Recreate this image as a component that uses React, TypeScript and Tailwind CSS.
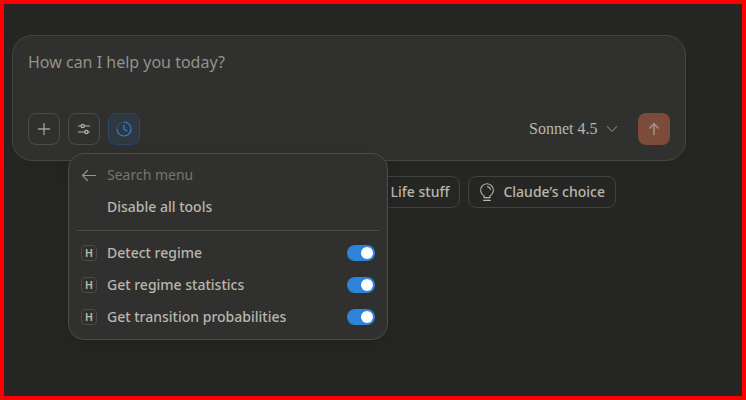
import { useState } from "react";

const tools = ["Detect regime", "Get regime statistics", "Get transition probabilities"];

function PlusIcon() {
  return (
    <svg width="16" height="16" viewBox="0 0 16 16" fill="none" stroke="currentColor" strokeWidth="1.3" strokeLinecap="round" aria-hidden="true">
      <path d="M8 2.5v11M2.5 8h11" />
    </svg>
  );
}

function SlidersIcon() {
  return (
    <svg width="16" height="16" viewBox="0 0 16 16" fill="none" stroke="currentColor" strokeWidth="1.2" strokeLinecap="round" aria-hidden="true">
      <path d="M2.5 5h2.5M8.4 5h5.1M2.5 11h6.2M12.1 11h1.4" />
      <circle cx="6.7" cy="5" r="1.6" />
      <circle cx="10.4" cy="11" r="1.6" />
    </svg>
  );
}

function ClockIcon() {
  return (
    <svg width="18" height="18" viewBox="0 0 18 18" fill="none" stroke="currentColor" strokeWidth="1.2" strokeLinecap="round" aria-hidden="true">
      <path d="M9 2a7 7 0 1 1-7 7" />
      <path d="M9 5v4.2l2.8 1.6" />
      <path d="M2.6 6.2v.01M4.1 4v.01M6.3 2.6v.01" strokeWidth="1.1" />
    </svg>
  );
}

function ArrowUpIcon() {
  return (
    <svg width="16" height="16" viewBox="0 0 16 16" fill="none" stroke="currentColor" strokeWidth="1.5" strokeLinecap="round" strokeLinejoin="round" aria-hidden="true">
      <path d="M8 13.5V2.8M3.8 7 8 2.8 12.2 7" />
    </svg>
  );
}

function ArrowLeftIcon() {
  return (
    <svg width="16" height="16" viewBox="0 0 16 16" fill="none" stroke="currentColor" strokeWidth="1.1" strokeLinecap="round" strokeLinejoin="round" aria-hidden="true">
      <path d="M14.5 8.5H1.7M6.5 3.5l-5 5 5 5" />
    </svg>
  );
}

function ChevronIcon() {
  return (
    <svg className="pointer-events-none" width="12" height="12" viewBox="0 0 12 12" fill="none" stroke="#96948b" strokeLinecap="round" strokeLinejoin="round" aria-hidden="true">
      <path d="M1.3 3.5 6 8.5l4.7-5" />
    </svg>
  );
}

function CoffeeIcon() {
  return (
    <svg width="16" height="16" viewBox="0 0 16 16" fill="none" stroke="currentColor" aria-hidden="true">
      <path d="M2 4h10v6a3 3 0 0 1-3 3H5a3 3 0 0 1-3-3zM12 5h1a2 2 0 0 1 0 5h-1" />
    </svg>
  );
}

function BulbIcon() {
  return (
    <svg width="16" height="20" viewBox="0 0 16 20" fill="none" stroke="currentColor" strokeWidth="1.1" strokeLinecap="round" strokeLinejoin="round" aria-hidden="true">
      <path d="M5 15.6v-1.8a6.4 6.4 0 1 1 6 0v1.8ZM4.6 18.4h6.8" />
      <path d="M8.6 4.6a3.4 3.4 0 0 1 2.8 2.8" />
    </svg>
  );
}

function ToolRow({ name }: { name: string }) {
  const [on, setOn] = useState(true);
  return (
    <label className="flex h-8 items-center gap-2.5 px-3 text-sm font-medium text-[#b8b6ad]">
      <span className="flex size-4 items-center justify-center rounded border border-[#4b4b48] font-['Inter',sans-serif] text-[10px] leading-none font-bold">H</span>
      <span className="flex-1">{name}</span>
      <input
        type="checkbox"
        role="switch"
        checked={on}
        onChange={() => setOn(!on)}
        className="h-4 w-7 appearance-none rounded-full bg-[#55554f] p-0.5 before:block before:size-3 before:rounded-full before:bg-white checked:bg-[#2c84db] checked:before:translate-x-3"
      />
    </label>
  );
}

function ToolsMenu() {
  return (
    <div className="absolute top-10 left-0 z-10 w-80 rounded-2xl border border-[#4b4b48] bg-[#30302e] pt-[5px] pb-1.5 shadow-[0_4px_16px_rgba(0,0,0,0.15)]">
      <div className="flex h-8 items-center gap-2.5 px-3">
        <button type="button" aria-label="Back" className="text-[#96948b]">
          <ArrowLeftIcon />
        </button>
        <input
          type="text"
          aria-label="Search menu"
          placeholder="Search menu"
          className="min-w-0 flex-1 bg-transparent text-sm outline-none placeholder:text-[#77766f]"
        />
      </div>
      <button type="button" className="block h-8 w-full pl-[38px] text-left text-sm font-medium text-[#b8b6ad]">
        Disable all tools
      </button>
      <hr className="mx-2 mt-[7px] mb-1.5 border-[#4b4b48]" />
      {tools.map((name) => (
        <ToolRow key={name} name={name} />
      ))}
    </div>
  );
}

export default function App() {
  return (
    <main className="min-h-screen border-4 border-[#ff0000] bg-[#262624] pt-[31px] pr-14 pl-2 font-['Noto_Sans',sans-serif] text-[#b8b6ad]">
      <form className="rounded-[20px] border border-[#454542] bg-[#30302e] p-[15px] shadow-[0_4px_20px_rgba(0,0,0,0.08)]">
        <textarea
          aria-label="Message"
          rows={1}
          placeholder="How can I help you today?"
          className="block h-[62px] w-full resize-none bg-transparent text-base leading-[22px] outline-none placeholder:text-[#94928a]"
        />
        <div className="flex items-center gap-2">
          <button type="button" aria-label="Add" className="flex size-8 items-center justify-center rounded-lg border border-[#4b4b48] text-[#a3a198]">
            <PlusIcon />
          </button>
          <div className="relative">
            <button type="button" aria-label="Tools" className="flex size-8 items-center justify-center rounded-lg border border-[#4b4b48]">
              <SlidersIcon />
            </button>
            <ToolsMenu />
          </div>
          <button type="button" aria-label="Extended thinking" className="flex size-8 items-center justify-center rounded-lg border border-[#2b4662] bg-[#2f3841] text-[#2c84db]">
            <ClockIcon />
          </button>
          <div className="ml-auto flex items-center gap-2 pr-3">
            <select aria-label="Model" className="appearance-none bg-transparent font-['Liberation_Serif',serif] text-base font-medium">
              <option>Sonnet 4.5</option>
            </select>
            <ChevronIcon />
          </div>
          <button type="submit" aria-label="Send" className="flex size-8 items-center justify-center rounded-lg bg-[#7d4b3a] text-[#a09692]">
            <ArrowUpIcon />
          </button>
        </div>
      </form>
      <div className="mt-[15px] flex justify-end gap-2 pr-[70px] text-sm font-medium">
        <button type="button" className="flex h-8 items-center gap-2 rounded-lg border border-[#41413e] px-2.5">
          <CoffeeIcon />
          Life stuff
        </button>
        <button type="button" className="flex h-8 items-center gap-2 rounded-lg border border-[#41413e] px-2.5">
          <BulbIcon />
          Claude’s choice
        </button>
      </div>
    </main>
  );
}
